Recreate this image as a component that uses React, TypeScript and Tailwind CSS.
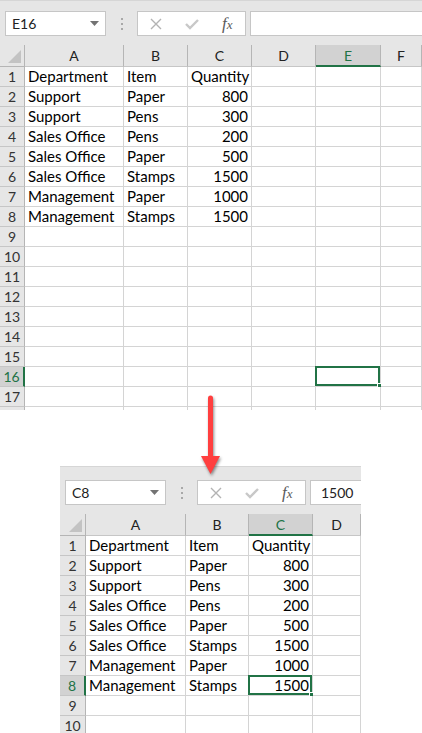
import React from "react";

type Col = { label: string; w: number };

type SheetProps = {
  cols: Col[];
  rowHead: number;
  rows: number;
  sel: { c: number; r: number };
  name: string;
  formula: string;
  padTop: string;
};

const data: string[][] = [
  ["Department", "Item", "Quantity"],
  ["Support", "Paper", "800"],
  ["Support", "Pens", "300"],
  ["Sales Office", "Pens", "200"],
  ["Sales Office", "Paper", "500"],
  ["Sales Office", "Stamps", "1500"],
  ["Management", "Paper", "1000"],
  ["Management", "Stamps", "1500"],
];

const font = { fontFamily: "Lato, 'Noto Sans', sans-serif" };

function Toolbar({ name, formula, padTop }: { name: string; formula: string; padTop: string }) {
  return (
    <div className={`flex items-start ${padTop} pb-[9px] pl-[5px] bg-[#e6e6e6]`}>
      <div className="w-[101px] h-[25px] shrink-0 bg-white border border-[#c6c6c6] flex items-center justify-between pl-[6px] pr-[6px] text-[14px] text-[#222]">
        <span>{name}</span>
        <svg width="9" height="5" viewBox="0 0 9 5">
          <path d="M0 0 L9 0 L4.5 5 Z" fill="#737373" />
        </svg>
      </div>
      <div className="w-[31px] h-[25px] shrink-0 flex flex-col items-center justify-center gap-[3px]">
        <span className="w-[2px] h-[2px] bg-[#a8a8a8]" />
        <span className="w-[2px] h-[2px] bg-[#a8a8a8]" />
        <span className="w-[2px] h-[2px] bg-[#a8a8a8]" />
      </div>
      <div className="w-[109px] h-[25px] shrink-0 bg-white border border-[#c6c6c6] flex items-center">
        <div className="w-[36px] flex justify-center">
          <svg width="12" height="12" viewBox="0 0 12 12">
            <path d="M1 1 L11 11 M11 1 L1 11" stroke="#b3b3b3" strokeWidth="1.4" />
          </svg>
        </div>
        <div className="w-[36px] flex justify-center">
          <svg width="14" height="12" viewBox="0 0 14 12">
            <path d="M1 6 L5 10 L13 2" stroke="#c8c8c8" strokeWidth="2.4" fill="none" />
          </svg>
        </div>
        <div className="w-[36px] flex justify-center">
          <span className="italic text-[#5a5a5a] text-[17px] leading-none" style={{ fontFamily: "'Liberation Serif', serif" }}>
            f<span className="text-[13px]">x</span>
          </span>
        </div>
      </div>
      <div className="ml-[4px] flex-1 h-[25px] bg-white border border-[#c6c6c6] border-r-0 flex items-center pl-[10px] text-[14px] text-[#222]">
        {formula}
      </div>
    </div>
  );
}

function Sheet({ cols, rowHead, rows, sel, name, formula, padTop }: SheetProps) {
  const tmpl = [rowHead, ...cols.map((c) => c.w)].map((w) => `${w}px`).join(" ");
  return (
    <div style={font}>
      <Toolbar name={name} formula={formula} padTop={padTop} />
      <div className="grid" style={{ gridTemplateColumns: tmpl }}>
        <div className="h-[22px] bg-[#e6e6e6] border-r border-b border-[#b5b5b5] flex items-end justify-end pr-[3px] pb-[3px]">
          <svg width="13" height="13" viewBox="0 0 13 13">
            <path d="M13 0 L13 13 L0 13 Z" fill="#c3c3c3" />
          </svg>
        </div>
        {cols.map((c, i) => {
          const on = i === sel.c;
          return (
            <div
              key={c.label}
              className={`h-[22px] flex items-center justify-center text-[14px] border-r border-[#b5b5b5] ${
                on ? "bg-[#d2d2d2] text-[#217346] border-b-2 border-b-[#217346]" : "bg-[#e6e6e6] text-[#222] border-b border-b-[#c6c6c6]"
              }`}
            >
              {c.label}
            </div>
          );
        })}
        {Array.from({ length: rows }, (_, ri) => {
          const r = ri + 1;
          const rowOn = r === sel.r;
          const partial = ri === rows - 1 && rows > 12;
          return (
            <React.Fragment key={r}>
              <div
                className={`h-[20px] flex items-center justify-center text-[14px] border-b border-b-[#c6c6c6] ${
                  rowOn ? "bg-[#d2d2d2] text-[#217346] border-r-2 border-r-[#217346]" : "bg-[#e6e6e6] text-[#333] border-r border-r-[#b5b5b5]"
                }`}
              >
                {partial ? "" : r}
              </div>
              {cols.map((c, ci) => {
                const v = data[ri]?.[ci] ?? "";
                const num = /^\d+$/.test(v);
                const on = rowOn && ci === sel.c;
                return (
                  <div
                    key={c.label}
                    className={`relative h-[20px] bg-white border-r border-b border-[#d4d4d4] flex items-center text-[15px] text-black whitespace-nowrap px-[3px] ${
                      num ? "justify-end" : "justify-start"
                    }`}
                  >
                    {v}
                    {on && (
                      <>
                        <div className="absolute -left-[1px] -top-[1px] right-0 bottom-0 border-2 border-[#217346]" />
                        <div className="absolute -right-[3px] -bottom-[3px] w-[6px] h-[6px] bg-[#217346] border border-white" />
                      </>
                    )}
                  </div>
                );
              })}
            </React.Fragment>
          );
        })}
      </div>
    </div>
  );
}

export default function App() {
  const topCols: Col[] = [
    { label: "A", w: 99 },
    { label: "B", w: 64 },
    { label: "C", w: 64 },
    { label: "D", w: 64 },
    { label: "E", w: 65 },
    { label: "F", w: 41 },
  ];
  const bottomCols: Col[] = [
    { label: "A", w: 100 },
    { label: "B", w: 63 },
    { label: "C", w: 64 },
    { label: "D", w: 48 },
  ];

  return (
    <div className="relative w-[422px] h-[733px] overflow-hidden bg-white">
      <div className="h-[410px] overflow-hidden border-t border-[#d6d6d6]">
        <Sheet cols={topCols} rowHead={25} rows={18} sel={{ c: 4, r: 16 }} name="E16" formula="" padTop="pt-[10px]" />
      </div>
      <div className="h-[56px]" />
      <div className="ml-[60px] w-[301px] h-[267px] overflow-hidden border-t border-[#d6d6d6]">
        <Sheet cols={bottomCols} rowHead={26} rows={10} sel={{ c: 2, r: 8 }} name="C8" formula="1500" padTop="pt-[13px]" />
      </div>

      <svg
        className="absolute left-[196px] top-[392px] drop-shadow-[1px_2px_1.5px_rgba(0,0,0,0.45)]"
        width="30"
        height="88"
        viewBox="0 0 30 88"
      >
        <path d="M14.5 6 L14.5 66" stroke="#ff3f3f" strokeWidth="5" strokeLinecap="round" />
        <path d="M5 64 L24 64 L14.5 82 Z" fill="#ff3f3f" />
      </svg>
    </div>
  );
}
